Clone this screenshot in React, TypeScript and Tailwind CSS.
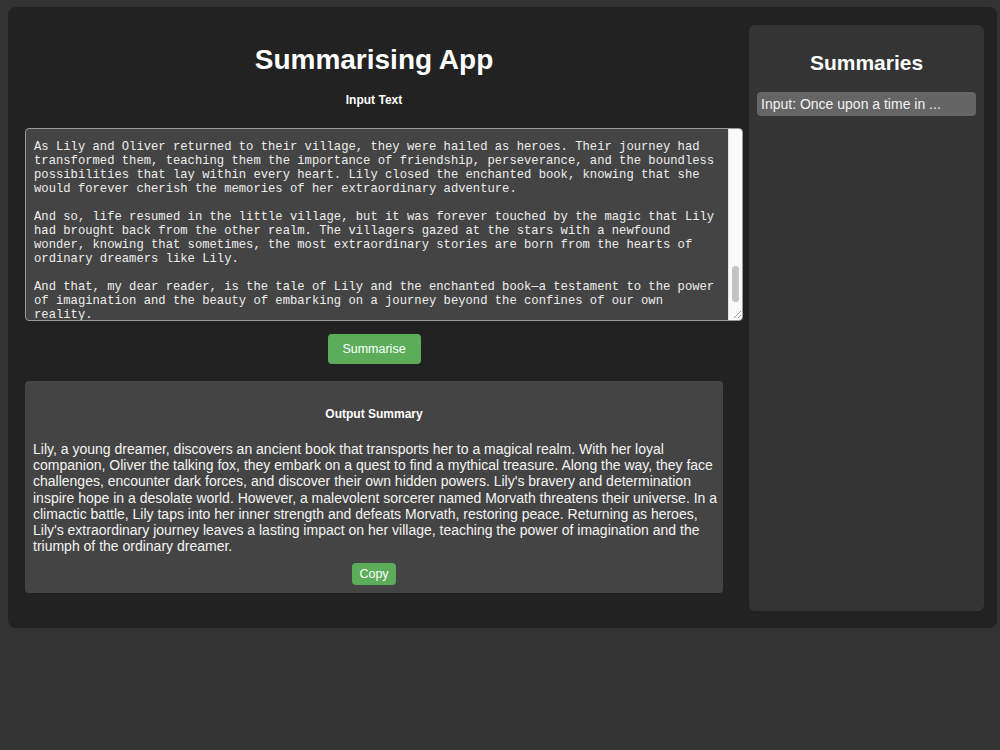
import React, { useEffect, useRef } from "react";

const story = `Once upon a time in a quiet village nestled between rolling hills, there lived a young girl named Lily. She spent her days wandering the meadows and her nights reading by candlelight, dreaming of worlds far beyond her own.

One rainy afternoon, while exploring the dusty attic of her grandmother's cottage, Lily discovered an ancient book bound in faded leather. Its pages shimmered with golden letters that seemed to dance beneath her fingertips.

As she read the first line aloud, a swirl of light burst from the pages and pulled her into a magical realm filled with towering trees, singing rivers and creatures she had only ever imagined.

There she met Oliver, a clever talking fox with a bright red coat and a mischievous grin. He told her of a mythical treasure hidden deep within the Whispering Mountains, a treasure said to hold the power to protect their world.

Together they set out on a daring quest. Along the way they crossed enchanted forests, solved riddles posed by wise old owls and faced the dark forces that lurked in the shadows of the land.

With every challenge, Lily discovered hidden powers within herself. Her courage grew stronger, and her kindness brought hope to the villagers of a desolate world who had long forgotten how to dream.

But a malevolent sorcerer named Morvath sought the treasure for himself. His dark magic spread across the realm, threatening to swallow their universe in endless night.

In a climactic battle atop the highest peak, Lily tapped into her inner strength. With Oliver by her side, she defeated Morvath and restored peace to the realm once more.

As Lily and Oliver returned to their village, they were hailed as heroes. Their journey had transformed them, teaching them the importance of friendship, perseverance, and the boundless possibilities that lay within every heart. Lily closed the enchanted book, knowing that she would forever cherish the memories of her extraordinary adventure.

And so, life resumed in the little village, but it was forever touched by the magic that Lily had brought back from the other realm. The villagers gazed at the stars with a newfound wonder, knowing that sometimes, the most extraordinary stories are born from the hearts of ordinary dreamers like Lily.

And that, my dear reader, is the tale of Lily and the enchanted book\u2014a testament to the power of imagination and the beauty of embarking on a journey beyond the confines of our own reality.`;

const summary =
  "Lily, a young dreamer, discovers an ancient book that transports her to a magical realm. With her loyal companion, Oliver the talking fox, they embark on a quest to find a mythical treasure. Along the way, they face challenges, encounter dark forces, and discover their own hidden powers. Lily's bravery and determination inspire hope in a desolate world. However, a malevolent sorcerer named Morvath threatens their universe. In a climactic battle, Lily taps into her inner strength and defeats Morvath, restoring peace. Returning as heroes, Lily's extraordinary journey leaves a lasting impact on her village, teaching the power of imagination and the triumph of the ordinary dreamer.";

const App = () => {
  const inputRef = useRef<HTMLTextAreaElement>(null);

  // keep the end of the story in view
  useEffect(() => {
    const el = inputRef.current;
    if (el) el.scrollTop = el.scrollHeight - el.clientHeight - 2;
  }, []);

  return (
    <div className="min-h-screen bg-[#333] pt-[7px] pl-2 font-['Liberation_Sans',Arial,sans-serif] text-white">
      <div className="flex w-[989px] h-[621px] gap-[26px] rounded-lg bg-[#222] pt-[18px] pb-[17px] pl-[17px] pr-[13px]">
        {/* Main column */}
        <main className="flex w-[698px] shrink-0 flex-col items-center">
          <h1 className="mt-[17px] text-[28px] leading-[36px] font-bold">
            Summarising App
          </h1>
          <label className="mt-[15px] text-[12px] leading-[14px] font-bold">
            Input Text
          </label>
          <div className="mt-[21px] flex h-[193px] w-[718px] shrink-0 self-start overflow-hidden rounded border border-[#9a9a9a] bg-[#444]">
            <textarea
              ref={inputRef}
              defaultValue={story}
              className="h-full min-w-0 flex-1 resize-none overflow-hidden bg-transparent px-2 pt-2 pb-0 font-['Liberation_Mono','Courier_New',monospace] text-[12.2px] leading-[14px] text-[#eee] outline-none"
            />
            <div className="flex w-[14px] shrink-0 flex-col items-center border-l border-[#e4e4e4] bg-[#fafafa]">
              <div className="mt-[137px] h-[36px] w-[7px] rounded-full bg-[#c4c4c4]" />
              <svg className="mt-auto mb-[1px] ml-[2px]" width="10" height="10" viewBox="0 0 10 10">
                <path d="M9 2L2 9M9 6L6 9" stroke="#9a9a9a" strokeWidth="1" />
              </svg>
            </div>
          </div>
          <button className="mt-[13px] h-[30px] w-[93px] rounded bg-[#5cad5a] text-[12.5px] text-white">
            Summarise
          </button>

          {/* Output */}
          <section className="mt-[17px] flex h-[212px] w-full flex-col items-center rounded bg-[#444] px-2 pt-[26px] pb-2">
            <h2 className="text-[12px] leading-[14px] font-bold">Output Summary</h2>
            <p className="mt-[20px] mr-[-8px] self-stretch text-[14px] leading-[16.2px] text-[#f4f4f4]">
              {summary}
            </p>
            <button className="mt-[9px] h-[22px] w-[44px] rounded bg-[#5cad5a] text-[12.5px] text-white">
              Copy
            </button>
          </section>
        </main>

        {/* History sidebar */}
        <aside className="flex w-[235px] shrink-0 flex-col rounded-md bg-[#343434] px-2 pt-6">
          <h2 className="mt-[1px] text-center text-[21px] leading-[26px] font-bold">Summaries</h2>
          <ul className="mt-[16px]">
            <li className="h-6 rounded bg-[#656565] pl-1 text-[14px] leading-6 text-[#f2f2f2]">
              Input: Once upon a time in ...
            </li>
          </ul>
        </aside>
      </div>
    </div>
  );
};

export default App;
